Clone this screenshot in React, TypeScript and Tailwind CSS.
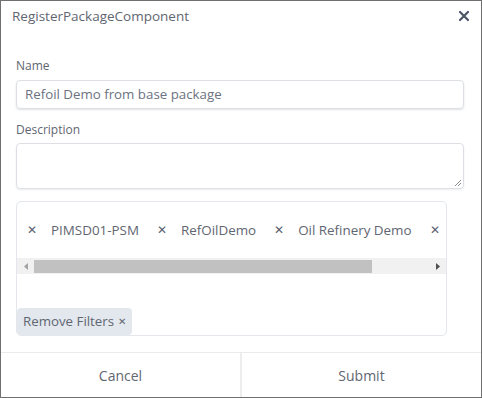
import React from 'react';

const chips = ['PIMSD01-PSM', 'RefOilDemo', 'Oil Refinery Demo'];

const App = () => {
  return (
    <div
      className="w-[482px] h-[398px] bg-white border border-[#707070] flex flex-col text-[#5f6671]"
      style={{ fontFamily: '"Open Sans", "Noto Sans", sans-serif' }}
    >
      {/* Header */}
      <div className="flex items-center justify-between h-[30px] pl-[11px] pr-[11px]">
        <span className="text-[13.5px]">RegisterPackageComponent</span>
        <svg width="12" height="12" viewBox="0 0 12 12" className="text-[#4b5563]">
          <path d="M2 2 L10 10 M10 2 L2 10" stroke="currentColor" strokeWidth="2.2" strokeLinecap="round" />
        </svg>
      </div>

      {/* Body */}
      <div className="flex-1 px-[15px] pt-[27px]">
        <label className="block text-[12px] leading-[16px] mb-[6px]">Name</label>
        <div className="h-[29px] w-[448px] rounded-[4px] border border-[#dcdfe3] shadow-[0_1px_2px_rgba(0,0,0,0.12)] flex items-center px-[8px] text-[13.3px] text-[#6b7280]">
          Refoil Demo from base package
        </div>

        <label className="block text-[12px] leading-[16px] mt-[13px] mb-[5px]">Description</label>
        <div className="relative h-[46px] w-[448px] rounded-[4px] border border-[#dcdfe3] shadow-[0_1px_2px_rgba(0,0,0,0.08)]">
          <svg width="8" height="8" viewBox="0 0 8 8" className="absolute right-[1px] bottom-[1px]">
            <path d="M7 1 L1 7 M7 4 L4 7" stroke="#8a8a8a" strokeWidth="1" />
          </svg>
        </div>

        {/* Filter box */}
        <div className="mt-[12px] w-[431px] h-[135px] rounded-[5px] border border-[#e3e6ea] flex flex-col">
          <div className="h-[56px] flex items-center pl-[10px] text-[13.4px] whitespace-nowrap overflow-hidden">
            {chips.map((c) => (
              <React.Fragment key={c}>
                <span className="text-[12px] text-[#5b6270] w-[24px]">✕</span>
                <span className="mr-[18px]">{c}</span>
              </React.Fragment>
            ))}
            <span className="text-[12px] text-[#5b6270]">✕</span>
          </div>
          {/* Scrollbar */}
          <div className="h-[16px] bg-[#f1f1f1] flex items-center">
            <div className="w-[17px] flex justify-center">
              <svg width="4" height="7" viewBox="0 0 4 7">
                <path d="M4 0 L0 3.5 L4 7 Z" fill="#a3a3a3" />
              </svg>
            </div>
            <div className="w-[338px] h-[13px] bg-[#c1c1c1]" />
            <div className="flex-1" />
            <div className="w-[17px] flex justify-center">
              <svg width="4" height="7" viewBox="0 0 4 7">
                <path d="M0 0 L4 3.5 L0 7 Z" fill="#505050" />
              </svg>
            </div>
          </div>
          <div className="flex-1 flex items-end">
            <div className="h-[27px] px-[6px] flex items-center bg-[#e3e8ee] rounded-[4px] text-[13.3px]">
              Remove Filters <span className="ml-[4px] text-[10px]">✕</span>
            </div>
          </div>
        </div>
      </div>

      {/* Footer */}
      <div className="h-[45px] border-t border-[#ebebeb] flex text-[14px]">
        <div className="flex-1 flex items-center justify-center border-r-2 border-[#ededed]">Cancel</div>
        <div className="flex-1 flex items-center justify-center">Submit</div>
      </div>
    </div>
  );
};

export default App;
